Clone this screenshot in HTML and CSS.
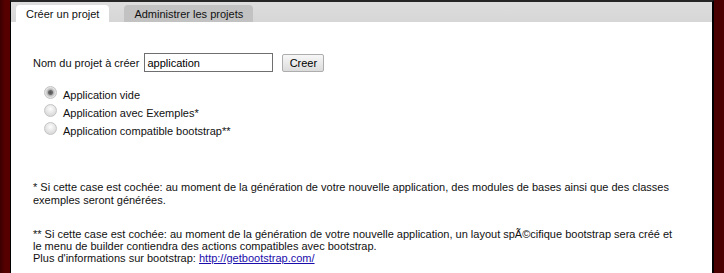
FILE: index.html
```html
<html>
<head>
    <meta charset="UTF-8">
    <title>Créer un projet</title>
    <link rel="stylesheet" href="styles.css">
</head>
<body>
    <div class="frame">
        <div class="tabs">
            <div class="tab active">Créer un projet</div>
            <div class="tab">Administrer les projets</div>
        </div>
        <div class="content">
            <div class="row">
                <label for="projectName">Nom du projet à créer</label>
                <input id="projectName" type="text" value="application">
                <button class="btn">Creer</button>
            </div>
            <div class="choices">
                <label class="choice"><input type="radio" name="type" checked> Application vide</label>
                <label class="choice"><input type="radio" name="type"> Application avec Exemples*</label>
                <label class="choice"><input type="radio" name="type"> Application compatible bootstrap**</label>
            </div>
            <p class="note">* Si cette case est cochée: au moment de la génération de votre nouvelle application, des modules de bases ainsi que des classes exemples seront générées.</p>
            <p class="note">** Si cette case est cochée: au moment de la génération de votre nouvelle application, un layout spÃ©cifique bootstrap sera créé et le menu de builder contiendra des actions compatibles avec bootstrap.<br>
            Plus d'informations sur bootstrap: <a href="http://getbootstrap.com/">http://getbootstrap.com/</a></p>
        </div>
    </div>
</body>
</html>
```

FILE: styles.css
```css
* {
    box-sizing: border-box;
}
body {
    margin: 0;
    background: linear-gradient(to right, #3a0000, #560000 5px, #4a0000);
    font-family: "Liberation Sans", Arial, sans-serif;
    font-size: 11px;
    color: #111;
}
.frame {
    margin: 0 10px;
    height: 273px;
    background: #fff;
    border-left: 1px solid #000;
    border-right: 2px solid #000;
    border-top: 2px solid #262626;
}
.tabs {
    display: flex;
    align-items: flex-end;
    gap: 15px;
    height: 20px;
    padding-left: 5px;
    background: linear-gradient(#dedede, #d6d6d6);
}
.tab {
    height: 17px;
    padding: 3px 10px 0;
    border-radius: 4px 4px 0 0;
    background: #c2c2c2;
    color: #111;
    white-space: nowrap;
}
.tab.active {
    background: #fff;
    padding: 3px 10px 0 10px;
    min-width: 93px;
}
.content {
    padding: 31px 22px 0;
}
.row {
    display: flex;
    align-items: center;
    height: 19px;
}
.row label {
    margin-right: 5px;
}
.row input {
    width: 129px;
    height: 19px;
    padding: 0 2px;
    border: 1px solid #6f6f6f;
    font-family: "Liberation Sans", Arial, sans-serif;
    font-size: 11px;
    color: #000;
}
.btn {
    margin-left: 9px;
    width: 42px;
    height: 18px;
    padding: 0;
    border: 1px solid #adadad;
    border-radius: 2px;
    background: linear-gradient(#f7f7f7, #dcdcdc);
    font-family: "Liberation Sans", Arial, sans-serif;
    font-size: 11px;
    color: #000;
}
.choices {
    display: flex;
    flex-direction: column;
    padding: 13px 0 0 10px;
}
.choice {
    display: flex;
    align-items: center;
    height: 18px;
    padding-top: 2px;
}
.choice input {
    appearance: none;
    margin: -5px 6px 0 1px;
    width: 13px;
    height: 13px;
    border-radius: 50%;
    border: 1px solid #c4c4c4;
    background: radial-gradient(circle at 50% 35%, #fdfdfd, #dcdcdc 70%, #cfcfcf);
}
.choice input:checked {
    background: radial-gradient(circle, #555 0, #6a6a6a 2px, #b5b5b5 3px, #e4e4e4 5px, #d2d2d2);
}
.note {
    max-width: 645px;
    margin: 42px 0 0;
    line-height: 13px;
}
.note + .note {
    margin-top: 21px;
    line-height: 12px;
}
a {
    color: #1a0dab;
}
```
